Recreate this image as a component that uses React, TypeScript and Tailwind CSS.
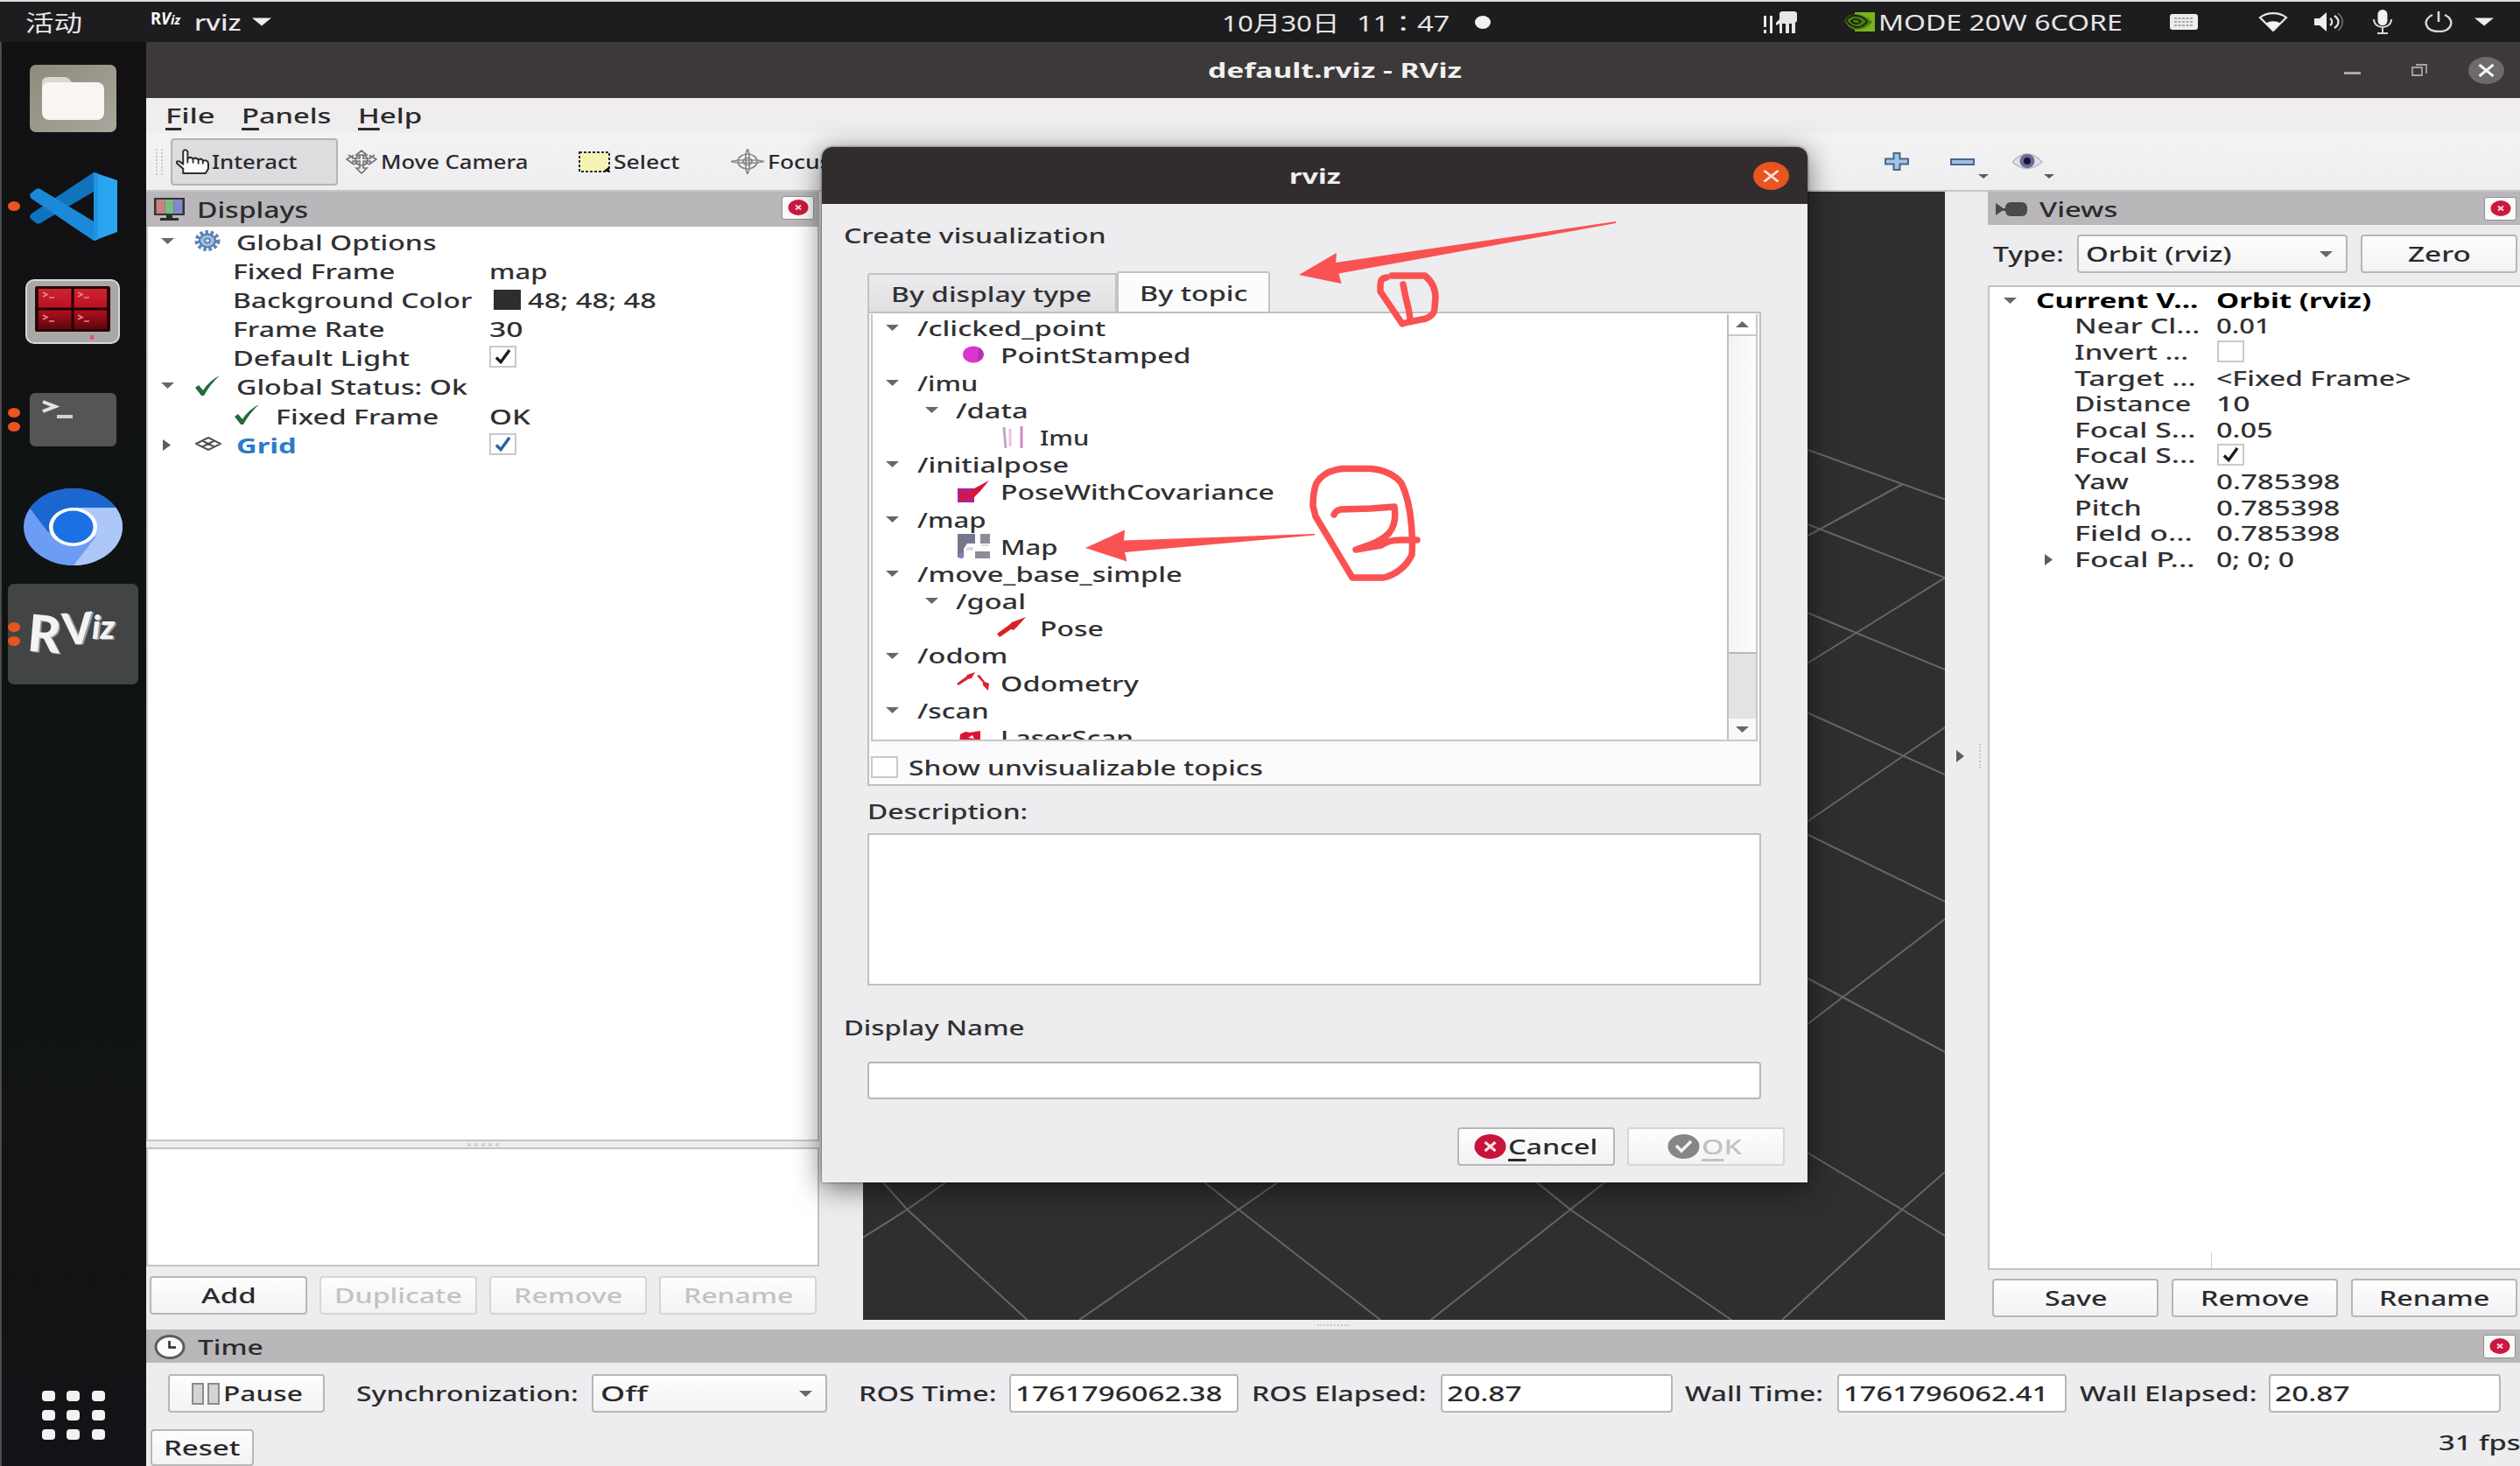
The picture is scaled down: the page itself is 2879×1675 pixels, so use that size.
import React, { useLayoutEffect, useRef, useState } from "react";

/* One line of text, stretched horizontally so that it fills the width class it is given. */
function T({ c, children }: { c: string; children: React.ReactNode }) {
  const inner = useRef<HTMLSpanElement>(null);
  const [scale, setScale] = useState(1);
  useLayoutEffect(() => {
    const el = inner.current;
    if (!el || !el.parentElement) return;
    setScale((el.parentElement.offsetWidth + 2) / el.offsetWidth);
  }, []);
  return (
    <span className={`block shrink-0 whitespace-pre ${c}`}>
      <span ref={inner} className="inline-block origin-left" style={{ transform: `translateX(-1px) scaleX(${scale})` }}>
        {children}
      </span>
    </span>
  );
}

const U = ({ children }: { children: React.ReactNode }) => (
  <span className="underline decoration-[3px] underline-offset-[5px]">{children}</span>
);

function Down({ c = "" }: { c?: string }) {
  return (
    <svg viewBox="0 0 14 7" preserveAspectRatio="none" className={`h-[7px] w-[15px] shrink-0 ${c}`}>
      <path d="M0 0H14L7 7Z" fill="#68686a" />
    </svg>
  );
}

function Right({ c = "" }: { c?: string }) {
  return (
    <svg viewBox="0 0 9 13" preserveAspectRatio="none" className={`h-[13px] w-[9px] shrink-0 ${c}`}>
      <path d="M0 0V13L9 6.500Z" fill="#5c5c5e" />
    </svg>
  );
}

function PanelClose({ c = "" }: { c?: string }) {
  return (
    <span className={`flex h-[27px] w-[37px] shrink-0 items-center justify-center rounded-[3px] border border-[#8f8e90] bg-[#fbfafb] ${c}`}>
      <svg viewBox="0 0 24 18" className="h-[18px] w-[24px]">
        <ellipse cx="12" cy="9" rx="11.500" ry="9" fill="#cc1840" />
        <path d="M9 6.500L15 11.500M15 6.500L9 11.500" stroke="#f8d5dc" strokeWidth="2" />
      </svg>
    </span>
  );
}

function Check({ c = "", on, color = "#1c1c1e" }: { c?: string; on?: boolean; color?: string }) {
  return (
    <span className={`flex h-[25px] w-[31px] shrink-0 items-center justify-center border-2 border-[#c9c8ca] bg-white ${c}`}>
      {on && (
        <svg viewBox="0 0 20 18" className="h-[17px] w-[19px]">
          <path d="M2 10L7.500 15.500L18 1" fill="none" stroke={color} strokeWidth="3.600" />
        </svg>
      )}
    </span>
  );
}

function Button({ c, disabled, children }: { c: string; disabled?: boolean; children: React.ReactNode }) {
  return (
    <span
      className={`flex shrink-0 items-center justify-center rounded-[4px] border-2 bg-linear-to-b from-[#fefefe] to-[#f3f2f4] ${
        disabled ? "border-[#d6d5d8] text-[#c3c2c5]" : "border-[#b7b6b9] text-[#2a2a2d]"
      } ${c}`}
    >
      {children}
    </span>
  );
}

/* ---------- top bar ---------- */

function TopBar() {
  return (
    <div className="flex h-[48px] shrink-0 items-center border-t-2 border-[#dcdcdc] bg-[#1d1c1e] text-[25px] text-[#e6e5e6]">
      <T c="ml-[30px] mt-[3px] w-[63px] text-[26px] font-normal">活动</T>
      <span className="ml-[80px] flex h-[26px] w-[34px] items-start font-bold leading-none text-white">
        <T c="w-[32px] text-[19px]">
          R<span className="italic">V</span>
          <span className="text-[15px] italic">iz</span>
        </T>
      </span>
      <T c="ml-[16px] w-[51px]">rviz</T>
      <svg viewBox="0 0 22 9" className="ml-[14px] h-[10px] w-[22px]">
        <path d="M0 0H22L11 9Z" fill="#eee" />
      </svg>
      <T c="ml-[1087px] mt-[2px] w-[132px] font-normal">10月30日</T>
      <T c="ml-[22px] mt-[2px] w-[104px] font-['Noto_Sans','Noto_Sans_CJK_TC',sans-serif] font-normal">11：47</T>
      <span className="ml-[30px] h-[15px] w-[18px] rounded-[50%] bg-[#f3f2f4]" />

      <svg viewBox="0 0 38 25" className="ml-[312px] h-[25px] w-[38px]" fill="#e8e6e6">
        <path d="M0 5H3V18H0ZM0 21H3V25H0ZM7 5H10V25H7ZM14 13L18 9V2L20 0H36L38 2V11L36 13V25H32V14H29V25H25V14H21V25H18V14L14 16Z" />
      </svg>
      <svg viewBox="0 0 36 22" className="ml-[53px] h-[22px] w-[36px]">
        <path d="M13 0H36V22H13Z" fill="#77b51c" />
        <path d="M1 9C6 2 14 1 20 3C28 6 31 9 33 11C28 17 22 20 15 20C8 20 4 15 1 9Z" fill="#4b7a14" />
        <path d="M3 9C7 4 13 3 18 4.500C23 6 26 9 27 11C23 16 18 17.500 14 17C9 16.500 6 13 3 9Z" fill="none" stroke="#17220a" strokeWidth="1.800" />
        <path d="M9 10C12 6.500 16 7 20 10.500C17 14 12 14 9 10Z" fill="none" stroke="#17220a" strokeWidth="1.800" />
      </svg>
      <T c="ml-[5px] w-[277px] font-normal">MODE 20W 6CORE</T>
      <svg viewBox="0 0 32 18" className="ml-[55px] h-[18px] w-[32px]">
        <rect width="32" height="18" rx="3" fill="#efeeee" />
        <path d="M5 5H27M5 9H27M5 13H27" stroke="#a9a8aa" strokeWidth="2" strokeDasharray="3 1.500" />
      </svg>
      <svg viewBox="0 0 34 22" className="ml-[69px] h-[22px] w-[34px]">
        <path d="M2 6C10 -0.500 24 -0.500 32 6L17 21Z" fill="none" stroke="#e8e6e6" strokeWidth="2.200" />
        <path d="M9 12.500C14 9.500 20 9.500 25 12.500L17 21Z" fill="#f5f4f4" />
      </svg>
      <svg viewBox="0 0 34 24" className="ml-[29px] h-[24px] w-[34px]">
        <path d="M1 8H7L15 1V23L7 16H1Z" fill="#f0efef" />
        <path d="M19 8C22 10 22 14 19 16" fill="none" stroke="#e8e6e6" strokeWidth="2.200" />
        <path d="M24 5C30 9 30 15 24 19" fill="none" stroke="#e8e6e6" strokeWidth="2.200" />
        <path d="M28 2C35 8 35 16 28 22" fill="none" stroke="#757475" strokeWidth="1.500" />
      </svg>
      <svg viewBox="0 0 24 28" className="ml-[33px] h-[28px] w-[24px]">
        <rect x="6.500" y="0" width="11" height="18" rx="5.500" fill="#f3f2f2" />
        <path d="M2 11C2 23 22 23 22 11M12 20V26M6 27H18" fill="none" stroke="#d9d8d8" strokeWidth="2" />
      </svg>
      <svg viewBox="0 0 32 24" className="ml-[36px] h-[24px] w-[32px]">
        <path d="M9 4C-3 9 0 23 16 23C32 23 35 9 23 4" fill="none" stroke="#d9d8d8" strokeWidth="2.400" />
        <path d="M16 0V12" stroke="#d9d8d8" strokeWidth="2.600" />
      </svg>
      <svg viewBox="0 0 22 9" className="ml-[25px] h-[10px] w-[22px]">
        <path d="M0 0H22L11 9Z" fill="#eee" />
      </svg>
    </div>
  );
}

/* ---------- dock ---------- */

function Dots({ n }: { n: number }) {
  return (
    <span className="flex w-[14px] shrink-0 flex-col gap-[5px]">
      {Array.from({ length: n }, (_, i) => (
        <span key={i} className="h-[11px] w-[14px] rounded-[50%] bg-[#e95420]" />
      ))}
    </span>
  );
}

function Dock() {
  return (
    <div className="flex w-[167px] shrink-0 flex-col border-l-2 border-[#4a4b4c] bg-linear-to-b from-[#121013] via-[#0e1412] to-[#141216]">
      <svg viewBox="0 0 99 77" className="ml-[32px] mt-[26px] h-[77px] w-[99px] shrink-0">
        <defs>
          <linearGradient id="files" x1="0" y1="0" x2="1" y2="1">
            <stop offset="0" stopColor="#8e8b7c" />
            <stop offset="1" stopColor="#aaa69b" />
          </linearGradient>
        </defs>
        <rect width="99" height="77" rx="7" fill="url(#files)" />
        <path d="M14 20Q14 14 22 14H40Q44 14 48 20H76V40H14Z" fill="#dcd8d0" />
        <rect x="14" y="20" width="71" height="43" rx="8" fill="#f9f5f3" />
      </svg>

      <div className="mt-[46px] flex h-[77px] items-center">
        <span className="ml-[7px]">
          <Dots n={1} />
        </span>
        <svg viewBox="0 0 100 78" className="ml-[11px] h-[78px] w-[100px]">
          <path d="M73 0L100 9V68L73 78Z" fill="#2aa5f2" />
          <path d="M73 0V22L12 58Q9 60 6 57L1 53Q-1 50 2 47Z" fill="#0f74bd" />
          <path d="M73 78V56L12 19Q9 17 6 20L1 24Q-1 27 2 30Z" fill="#1b88d8" />
          <path d="M73 0L78 1V77L73 78Z" fill="#1f95e2" />
        </svg>
      </div>

      <svg viewBox="0 0 108 74" className="ml-[27px] mt-[45px] h-[74px] w-[108px] shrink-0">
        <defs>
          <linearGradient id="tr" x1="0" y1="0" x2="0" y2="1">
            <stop offset="0" stopColor="#cf2333" />
            <stop offset="0.500" stopColor="#b8101f" />
            <stop offset="1" stopColor="#5c060c" />
          </linearGradient>
        </defs>
        <rect x="1" y="1" width="106" height="72" rx="9" fill="#a9a8a6" stroke="#d8d7d4" strokeWidth="2" />
        <rect x="11" y="8" width="86" height="52" rx="2" fill="#2c0507" />
        <rect x="15" y="11" width="78" height="46" fill="url(#tr)" />
        <path d="M54 9V59M12 34H96" stroke="#1d0304" strokeWidth="3" />
        <path d="M20 15L25 17.500L20 20M27 21H33M60 15L65 17.500L60 20M67 21H73M20 41L25 43.500L20 46M27 48H33M60 41L65 43.500L60 46M67 48H73" fill="none" stroke="#e58a90" strokeWidth="1.600" />
        <path d="M76 64V69" stroke="#e84a7a" strokeWidth="4" />
      </svg>

      <div className="mt-[56px] flex h-[61px] items-center">
        <span className="ml-[7px]">
          <Dots n={2} />
        </span>
        <svg viewBox="0 0 99 61" className="ml-[11px] h-[61px] w-[99px]">
          <rect width="99" height="61" rx="6" fill="#555557" />
          <path d="M15 10L29 15.500L15 21" fill="none" stroke="#e4e3e3" strokeWidth="4" />
          <path d="M31 27H49" stroke="#d4d3d3" strokeWidth="4" />
        </svg>
      </div>

      <svg viewBox="0 0 113 88" className="ml-[25px] mt-[48px] h-[88px] w-[113px] shrink-0">
        <clipPath id="disc">
          <ellipse cx="56.500" cy="44" rx="56.500" ry="44" />
        </clipPath>
        <g clipPath="url(#disc)">
          <rect width="113" height="88" fill="#6c9cf4" />
          <path d="M5 20L28 50L56 44L84 23H113V0H0Z" fill="#1b66d0" />
          <path d="M56 22H113V88H57L82 56Z" fill="#acc7f8" />
        </g>
        <ellipse cx="56.500" cy="44" rx="27.500" ry="22" fill="#fff" />
        <ellipse cx="56.500" cy="44" rx="23" ry="18.500" fill="#1a70e4" />
      </svg>

      <div className="ml-[7px] mt-[21px] flex h-[115px] w-[149px] shrink-0 items-center rounded-[7px] bg-[#424445]">
        <Dots n={2} />
        <span className="ml-[9px] flex h-[92px] items-start font-['Lato'] font-black leading-none text-[#f4f3f3] [text-shadow:2px_1px_0_#98989a]">
          <span className="mt-[15px] w-[39px] rotate-[5deg] text-[58px]">R</span>
          <span className="mt-[13px] w-[34px] -rotate-[4deg] text-[50px]">V</span>
          <span className="mt-[17px] text-[38px] italic">iz</span>
        </span>
      </div>

      <div className="mb-[30px] ml-[46px] mt-auto grid w-[71px] grid-cols-3 gap-x-[14px] gap-y-[10px]">
        {Array.from({ length: 9 }, (_, i) => (
          <span key={i} className="h-[12px] w-[15px] rounded-[4px] bg-[#f3f2f2]" />
        ))}
      </div>
    </div>
  );
}

/* ---------- window chrome ---------- */

function TitleBar() {
  return (
    <div className="flex h-[64px] shrink-0 items-center bg-[#3d393a] font-bold text-[24px] text-[#f1f0f0]">
      <T c="ml-[1214px] w-[288px]">default.rviz - RViz</T>
      <span className="ml-[1009px] mt-[6px] h-[3px] w-[19px] bg-[#aaa8a9]" />
      <svg viewBox="0 0 18 14" className="ml-[58px] h-[14px] w-[18px]">
        <path d="M1 4H12V13H1ZM5 1H17V11" fill="none" stroke="#a5a3a4" strokeWidth="1.800" />
      </svg>
      <svg viewBox="0 0 41 31" className="ml-[47px] h-[31px] w-[41px]">
        <ellipse cx="20.500" cy="15.500" rx="20.500" ry="15.500" fill="#6c6a6b" />
        <path d="M12.500 9L28.500 22M28.500 9L12.500 22" stroke="#f3f2f2" strokeWidth="3" />
      </svg>
    </div>
  );
}

function MenuBar() {
  return (
    <div className="flex h-[40px] shrink-0 items-center bg-[#efedee] text-[24px] text-[#2a2a2d]">
      <T c="ml-[23px] w-[54px]"><U>F</U>ile</T>
      <T c="ml-[33px] w-[100px]"><U>P</U>anels</T>
      <T c="ml-[33px] w-[71px]"><U>H</U>elp</T>
    </div>
  );
}

function ToolBar() {
  return (
    <div className="flex h-[67px] shrink-0 items-center border-b-2 border-[#c6c5c7] bg-linear-to-b from-[#f4f3f4] to-[#eeedef] text-[22px] text-[#2a2a2d]">
      <span className="ml-[11px] h-[30px] w-[8px] border-x-2 border-dotted border-[#c9c8ca]" />
      <span className="ml-[9px] flex h-[54px] w-[191px] items-center rounded-[4px] border-2 border-[#b5b4b6] bg-[#dddcde]">
        <svg viewBox="0 0 37 28" preserveAspectRatio="none" className="ml-[4px] h-[29px] w-[38px] shrink-0">
          <path d="M8 27V22L1 16Q0 13 4 14L8 17V3Q10 -0.500 13 3V11Q16 8 19 11Q22 9 25 12Q28 10 30 13Q36 12 36 17V22L33 27Z" fill="#fdfdfd" stroke="#2f2f31" strokeWidth="2" strokeLinejoin="round" />
          <path d="M13 11V16M19 11V16M25 12V17M30 13V17" stroke="#2f2f31" strokeWidth="1.800" />
        </svg>
        <T c="ml-[4px] w-[95px]">Interact</T>
      </span>
      <svg viewBox="0 0 36 28" className="ml-[9px] h-[28px] w-[36px]" fill="none" stroke="#77777a" strokeWidth="1.700">
        <path d="M18 1L24 6H20V10H28V7L35 11L28 16V13H20V21H24L18 27L12 21H16V13H8V16L1 11L8 7V10H16V6H12Z" />
        <path d="M3 6L8 9M33 6L28 9M9 17L14 14M27 17L22 14" />
        <ellipse cx="18" cy="12" rx="7" ry="6" />
      </svg>
      <T c="ml-[5px] w-[167px]">Move Camera</T>
      <svg viewBox="0 0 36 24" className="ml-[58px] h-[24px] w-[36px]">
        <rect x="1" y="1" width="34" height="22" fill="#f6f4b4" stroke="#2b2b2b" strokeWidth="2" strokeDasharray="3 2" />
        <path d="M35 17V23H28Z" fill="#111" />
      </svg>
      <T c="ml-[5px] w-[74px]">Select</T>
      <svg viewBox="0 0 38 29" className="ml-[59px] h-[29px] w-[38px]" fill="none" stroke="#88888a" strokeWidth="1.700">
        <ellipse cx="19" cy="14.500" rx="11" ry="8.500" />
        <ellipse cx="19" cy="14.500" rx="5" ry="4" />
        <path d="M19 0L21 6V23L19 29L17 23V6ZM0 14.500L8 13H30L38 14.500L30 16H8Z" />
      </svg>
      <T c="ml-[5px] w-[70px]">Focus</T>
      <svg viewBox="0 0 28 21" className="ml-[1205px] h-[21px] w-[28px]">
        <path d="M10.500 1H17.500V7.500H27V13.500H17.500V20H10.500V13.500H1V7.500H10.500Z" fill="#a4c3e6" stroke="#44698f" strokeWidth="2" />
      </svg>
      <svg viewBox="0 0 44 34" className="ml-[47px] mt-[4px] h-[34px] w-[44px]">
        <path d="M1 12H27V18H1Z" fill="#9fbfe2" stroke="#44698f" strokeWidth="2" />
        <path d="M32 29H44L38 34Z" fill="#5c5c5e" />
      </svg>
      <svg viewBox="0 0 48 34" className="ml-[27px] mt-[4px] h-[34px] w-[48px]">
        <path d="M0 15Q17 -3 34 15Q17 30 0 15Z" fill="#e3e1e6" stroke="#b9b7bb" strokeWidth="1.500" />
        <ellipse cx="17" cy="14" rx="8.500" ry="8" fill="#6a6c9c" />
        <ellipse cx="17" cy="14" rx="4" ry="4" fill="#15152e" />
        <path d="M36 29H48L42 34Z" fill="#5c5c5e" />
      </svg>
    </div>
  );
}

/* ---------- displays panel ---------- */

const Gear = () => (
  <svg viewBox="0 0 30 24" className="mb-[4px] h-[24px] w-[30px]">
    <ellipse cx="15" cy="12" rx="12" ry="9.500" fill="none" stroke="#5f86b8" strokeWidth="5" strokeDasharray="3.500 2.500" />
    <ellipse cx="15" cy="12" rx="9" ry="7.500" fill="#9fbbdd" stroke="#5078ad" strokeWidth="2" />
    <ellipse cx="15" cy="12" rx="3" ry="2.500" fill="#dce7f4" stroke="#5078ad" strokeWidth="1.500" />
  </svg>
);

const Tick = () => (
  <svg viewBox="0 0 30 24" className="mb-[2px] h-[24px] w-[30px]">
    <path d="M1 14L5 11L10 17Q17 6 29 0Q18 10 11 23H8Z" fill="#1f6b3b" />
  </svg>
);

const GridIcon = () => (
  <svg viewBox="0 0 30 16" className="mb-[2px] h-[16px] w-[30px]" fill="none" stroke="#4f4f52" strokeWidth="2">
    <path d="M1 8L15 1L29 8L15 15ZM8 4.500L22 11.500M22 4.500L8 11.500" />
  </svg>
);

function Row({ label, children }: { label: React.ReactNode; children?: React.ReactNode }) {
  return (
    <div className="flex h-[33.1px] items-center">
      <div className="flex w-[391px] shrink-0 items-center">{label}</div>
      {children}
    </div>
  );
}

function Displays() {
  return (
    <div className="flex w-[769px] shrink-0 flex-col">
      <div className="flex h-[40px] shrink-0 items-center bg-[#b9b7ba] text-[25px] text-[#2a2a2d]">
        <svg viewBox="0 0 37 28" className="ml-[8px] h-[28px] w-[37px]">
          <rect x="1" y="1" width="35" height="20" fill="#333" />
          <path d="M3.500 3H13.500V19H3.500Z" fill="#c98183" />
          <path d="M13.500 3H23.500V19H13.500Z" fill="#7dbb84" />
          <path d="M23.500 3H33.500V19H23.500Z" fill="#8588cf" />
          <path d="M15 21H22V24H29V27H8V24H15Z" fill="#2b2b2b" />
        </svg>
        <T c="ml-[14px] w-[125px]">Displays</T>
        <PanelClose c="ml-auto mb-[4px] mr-[6px]" />
      </div>
      <div className="flex h-[1045px] shrink-0 flex-col border-2 border-t-0 border-[#c6c5c7] bg-white pt-px text-[24px] text-[#303033]">
        <Row label={<><Down c="mb-[3px] ml-[15px] mr-[23px]" /><Gear /><T c="ml-[19px] w-[227px]">Global Options</T></>} />
        <Row label={<T c="ml-[98px] w-[183px]">Fixed Frame</T>}>
          <T c="w-[64px]">map</T>
        </Row>
        <Row label={<T c="ml-[98px] w-[271px]">Background Color</T>}>
          <span className="ml-[4px] h-[23px] w-[31px] bg-[#2d2d2e]" />
          <T c="ml-[9px] w-[145px]">48; 48; 48</T>
        </Row>
        <Row label={<T c="ml-[98px] w-[172px]">Frame Rate</T>}>
          <T c="w-[36px]">30</T>
        </Row>
        <Row label={<T c="ml-[98px] w-[200px]">Default Light</T>}>
          <Check on c="-ml-px mb-[3px]" />
        </Row>
        <Row label={<><Down c="mb-[3px] ml-[15px] mr-[23px]" /><Tick /><T c="ml-[19px] w-[262px]">Global Status: Ok</T></>} />
        <Row label={<><span className="ml-[98px]"><Tick /></span><T c="ml-[19px] w-[184px]">Fixed Frame</T></>}>
          <T c="w-[45px]">OK</T>
        </Row>
        <Row label={<><Right c="ml-[17px] mr-[28px]" /><GridIcon /><T c="ml-[18px] w-[66px] font-bold text-[#2c7bc8]">Grid</T></>}>
          <Check on c="-ml-px mb-px" color="#2f5f9e" />
        </Row>
      </div>
      <div className="flex h-[7px] shrink-0 items-center justify-center">
        <span className="w-[36px] border-t-[4px] border-dotted border-[#cfced0]" />
      </div>
      <div className="h-[136px] shrink-0 border-2 border-[#c3c2c4] bg-white" />
      <div className="mt-[11px] flex gap-[14px] pl-[4px] text-[24px]">
        <Button c="h-[44px] w-[180px]"><T c="w-[60px]">Add</T></Button>
        <Button disabled c="h-[44px] w-[180px]"><T c="w-[144px]">Duplicate</T></Button>
        <Button disabled c="h-[44px] w-[180px]"><T c="w-[122px]">Remove</T></Button>
        <Button disabled c="h-[44px] w-[180px]"><T c="w-[123px]">Rename</T></Button>
      </div>
    </div>
  );
}

/* ---------- 3D view ---------- */

const gridLines = [
  "M2060 512L2222 570.500", "M2174 553L2060 615", "M2060 597L2222 660", "M2222 660L2060 761", "M2060 698L2222 765",
  "M2060 812L2222 885", "M2222 831L2060 942", "M2060 951L2222 1030", "M2222 1050L2060 1174", "M2060 1115L2222 1202",
  "M2060 1314L2173 1382L2222 1412", "M2222 1339L2173 1382L2036 1508", "M990 1330L1036.500 1382L1173.600 1508",
  "M1110 1330L1036.500 1382L986 1414", "M1350 1330L1415 1382L1577 1508", "M1490 1330L1415 1382L1233 1508",
  "M1730 1330L1794 1382L1978 1508", "M1860 1330L1794 1382L1634.700 1508",
];

function Viewport() {
  return (
    <div className="ml-[50px] w-[1236px] shrink-0 bg-[#2f2f31]">
      <svg viewBox="986 219 1236 1289" className="h-[1289px] w-[1236px]">
        <path d={gridLines.join("")} fill="none" stroke="#666668" strokeWidth="2" />
      </svg>
    </div>
  );
}

/* ---------- views panel ---------- */

function VRow({ label, children }: { label: React.ReactNode; children: React.ReactNode }) {
  return (
    <div className="flex h-[29.6px] items-center">
      <div className="flex w-[260px] shrink-0 items-center">{label}</div>
      {children}
    </div>
  );
}

function Views() {
  return (
    <div className="flex flex-1 flex-col">
      <div className="flex h-[38px] shrink-0 items-center bg-[#b9b7ba] text-[24px] text-[#2a2a2d]">
        <svg viewBox="0 0 36 16" className="ml-[9px] mt-[2px] h-[16px] w-[36px]" fill="#4a4a4c">
          <path d="M0 1L10 8L0 15Z" />
          <rect x="11" y="0" width="25" height="16" rx="6" />
          <path d="M8 7H13V10H8Z" />
        </svg>
        <T c="ml-[15px] mt-[2px] w-[88px]">Views</T>
        <PanelClose c="ml-auto mr-[4px]" />
      </div>
      <div className="mt-[11px] flex items-center pl-[7px] text-[24px] text-[#2a2a2d]">
        <T c="w-[79px]">Type:</T>
        <span className="ml-[16px] flex h-[44px] w-[309px] items-center justify-between rounded-[4px] border-2 border-[#b7b6b9] bg-linear-to-b from-[#fefefe] to-[#f3f2f4] pl-[9px] pr-[15px]">
          <T c="w-[164px]">Orbit (rviz)</T>
          <Down />
        </span>
        <Button c="ml-[15px] h-[44px] w-[179px]"><T c="w-[70px]">Zero</T></Button>
      </div>
      <div className="mt-[14px] flex h-[1125px] shrink-0 flex-col border-2 border-r-0 border-[#c3c2c4] bg-white pt-px text-[23px] text-[#303033]">
        <VRow label={<><Down c="ml-[16px] mr-[23px]" /><T c="w-[184px] font-bold text-black">Current V...</T></>}>
          <T c="w-[175px] font-bold text-black">Orbit (rviz)</T>
        </VRow>
        <VRow label={<T c="ml-[98px] w-[142px]">Near Cl...</T>}><T c="w-[60px]">0.01</T></VRow>
        <VRow label={<T c="ml-[98px] w-[128px]">Invert ...</T>}><Check c="mb-[3px]" /></VRow>
        <VRow label={<T c="ml-[98px] w-[137px]">Target ...</T>}><T c="w-[221px]">&lt;Fixed Frame&gt;</T></VRow>
        <VRow label={<T c="ml-[98px] w-[131px]">Distance</T>}><T c="w-[36px]">10</T></VRow>
        <VRow label={<T c="ml-[98px] w-[136px]">Focal S...</T>}><T c="w-[63px]">0.05</T></VRow>
        <VRow label={<T c="ml-[98px] w-[136px]">Focal S...</T>}><Check on c="mb-[3px]" /></VRow>
        <VRow label={<T c="ml-[98px] w-[60px]">Yaw</T>}><T c="w-[139px]">0.785398</T></VRow>
        <VRow label={<T c="ml-[98px] w-[75px]">Pitch</T>}><T c="w-[139px]">0.785398</T></VRow>
        <VRow label={<T c="ml-[98px] w-[133px]">Field o...</T>}><T c="w-[139px]">0.785398</T></VRow>
        <VRow label={<><Right c="ml-[63px] mr-[26px]" /><T c="w-[136px]">Focal P...</T></>}><T c="w-[87px]">0; 0; 0</T></VRow>
        <span className="ml-[253px] mt-auto h-[18px] w-px bg-[#cfced0]" />
      </div>
      <div className="mt-[10px] flex gap-[15px] pl-[5px] text-[24px]">
        <Button c="h-[44px] w-[190px]"><T c="w-[69px]">Save</T></Button>
        <Button c="h-[44px] w-[190px]"><T c="w-[122px]">Remove</T></Button>
        <Button c="h-[44px] w-[190px]"><T c="w-[124px]">Rename</T></Button>
      </div>
    </div>
  );
}

/* ---------- time panel ---------- */

function Field({ c, children }: { c: string; children: React.ReactNode }) {
  return (
    <span className={`flex h-[44px] shrink-0 items-center rounded-[4px] border-2 border-[#b7b6b9] bg-white pl-[6px] ${c}`}>{children}</span>
  );
}

function Time() {
  return (
    <div className="flex flex-1 flex-col text-[24px] text-[#2a2a2d]">
      <div className="flex h-[38px] shrink-0 items-center bg-[#b9b7ba]">
        <svg viewBox="0 0 36 28" className="ml-[9px] mt-[2px] h-[28px] w-[36px]">
          <ellipse cx="18" cy="14" rx="16" ry="12.500" fill="#fbfbfb" stroke="#5c5c5e" strokeWidth="3" />
          <path d="M17.500 7V14.500H25" fill="none" stroke="#2b2b2d" strokeWidth="2.500" />
        </svg>
        <T c="ml-[15px] mt-[2px] w-[72px]">Time</T>
        <PanelClose c="ml-auto mr-[5px]" />
      </div>
      <div className="mt-[13px] flex items-center">
        <Button c="ml-[25px] h-[44px] w-[179px]">
          <svg viewBox="0 0 33 25" className="h-[25px] w-[33px]">
            <path d="M1 1H13V24H1ZM19 1H31V24H19Z" fill="#d3d2d5" stroke="#8b8a8d" strokeWidth="2" />
          </svg>
          <T c="ml-[4px] w-[89px]">Pause</T>
        </Button>
        <T c="ml-[37px] w-[252px]">Synchronization:</T>
        <span className="ml-[16px] flex h-[44px] w-[269px] items-center justify-between rounded-[4px] border-2 border-[#b7b6b9] bg-linear-to-b from-[#fefefe] to-[#f3f2f4] pl-[9px] pr-[15px]">
          <T c="w-[52px]">Off</T>
          <Down />
        </span>
        <T c="ml-[37px] w-[155px]">ROS Time:</T>
        <Field c="ml-[16px] w-[262px]"><T c="w-[234px]">1761796062.38</T></Field>
        <T c="ml-[16px] w-[198px]">ROS Elapsed:</T>
        <Field c="ml-[17px] w-[265px]"><T c="w-[83px]">20.87</T></Field>
        <T c="ml-[15px] w-[156px]">Wall Time:</T>
        <Field c="ml-[17px] w-[262px]"><T c="w-[232px]">1761796062.41</T></Field>
        <T c="ml-[16px] w-[200px]">Wall Elapsed:</T>
        <Field c="ml-[15px] w-[265px]"><T c="w-[83px]">20.87</T></Field>
      </div>
      <div className="mt-[19px] flex items-start">
        <Button c="ml-[5px] h-[42px] w-[118px]"><T c="w-[86px]">Reset</T></Button>
        <T c="-mt-px ml-auto w-[92px]">31 fps</T>
      </div>
    </div>
  );
}

/* ---------- dialog ---------- */

const PointIcon = () => (
  <svg viewBox="0 0 38 28" className="h-[28px] w-[38px]">
    <ellipse cx="19" cy="13" rx="12" ry="9.500" fill="#d936cf" />
    <path d="M25 5Q31 9 30 14Q28 19 24 21.500Z" fill="#b033b0" />
  </svg>
);
const ImuIcon = () => (
  <svg viewBox="0 0 38 28" className="h-[28px] w-[38px]" fill="none" strokeWidth="3">
    <path d="M9 2L11 26" stroke="#c9a0cc" />
    <path d="M16 4V24" stroke="#eebfe6" />
    <path d="M29 1V26" stroke="#d287c6" />
  </svg>
);
const CovIcon = () => (
  <svg viewBox="0 0 38 28" className="h-[28px] w-[38px]">
    <path d="M1 10H20V26H1Z" fill="#b0208e" />
    <path d="M4 12L9 17L22 9L37 1L27 13L18 22L13 20L4 25Z" fill="#d3183c" />
  </svg>
);
const MapIcon = () => (
  <svg viewBox="0 0 38 28" className="h-[28px] w-[38px]">
    <path d="M1 0H21V11H12L8 17V27H1Z" fill="#75788c" />
    <path d="M27 0H38V11H27ZM21 20H38V28H21Z" fill="#8b8d98" />
    <path d="M11 15H19V19H11ZM28 12H37V14H28Z" fill="#dcdbe2" />
    <path d="M3 22H7V28H3Z" fill="#8a7ae0" />
  </svg>
);
const PoseIcon = () => (
  <svg viewBox="0 0 38 28" className="h-[28px] w-[38px]">
    <path d="M1 20L15 10L18 7L34 1L26 10L20 16L17 15L4 24Z" fill="#d92027" />
  </svg>
);
const OdomIcon = () => (
  <svg viewBox="0 0 38 28" className="h-[28px] w-[38px]" fill="#d8242f">
    <path d="M0 15L11 7L12 5L21 2L17 9L13 10L2 17Z" />
    <path d="M23 6L26 5L32 13L37 15L36 23L30 17V14Z" />
  </svg>
);
const LaserIcon = () => (
  <svg viewBox="0 0 38 28" className="h-[28px] w-[38px]">
    <path d="M4 10L10 7L15 8L27 6V26H18L16 17L8 26L3 20Z" fill="#dc1433" />
    <path d="M13 14L18 11L20 15Z" fill="#fff" />
  </svg>
);

function Topic({ deep, c, children }: { deep?: boolean; c: string; children: React.ReactNode }) {
  return (
    <div className={`flex h-[31.2px] shrink-0 items-center ${deep ? "pl-[60px]" : "pl-[15px]"}`}>
      <Down c={deep ? "mr-[21px]" : "mr-[22px]"} />
      <T c={c}>{children}</T>
    </div>
  );
}

function Leaf({ deep, c, icon, children }: { deep?: boolean; c: string; icon: React.ReactNode; children: React.ReactNode }) {
  return (
    <div className={`flex h-[31.2px] shrink-0 items-center ${deep ? "pl-[141px]" : "pl-[96px]"}`}>
      <span className="mr-[13px] shrink-0">{icon}</span>
      <T c={c}>{children}</T>
    </div>
  );
}

function Dialog() {
  return (
    <div className="absolute left-[939px] top-[168px] flex h-[1183px] w-[1126px] flex-col rounded-t-[12px] bg-[#edecee] text-[24px] text-[#303033] shadow-[0_6px_32px_rgba(0,0,0,0.55),0_0_3px_rgba(0,0,0,0.6)]">
      <div className="flex h-[65px] shrink-0 items-center rounded-t-[12px] bg-[#312d2e] font-bold text-[#f1f0f0]">
        <T c="ml-[535px] w-[56px]">rviz</T>
        <svg viewBox="0 0 41 32" className="ml-auto mr-[21px] h-[32px] w-[41px]">
          <ellipse cx="20.500" cy="16" rx="20.500" ry="16" fill="#e95420" />
          <path d="M12.500 10L28.500 22.500M28.500 10L12.500 22.500" stroke="#fbe6df" strokeWidth="2.800" />
        </svg>
      </div>
      <T c="ml-[26px] mt-[20px] w-[298px]">Create visualization</T>
      <div className="ml-[52px] mt-[26px] flex h-[46px] shrink-0 items-end">
        <span className="flex h-[44px] w-[285px] items-center justify-center rounded-tl-[3px] border-2 border-b-0 border-[#c3c2c4] bg-linear-to-b from-[#ecebed] to-[#e0dfe1]">
          <T c="mr-[2px] mt-px w-[227px]">By display type</T>
        </span>
        <span className="flex h-[46px] w-[175px] items-center justify-center rounded-t-[3px] border-2 border-b-0 border-[#c3c2c4] bg-[#fcfcfd]">
          <T c="w-[122px]">By topic</T>
        </span>
      </div>
      <div className="ml-[52px] flex h-[542px] w-[1021px] shrink-0 flex-col border-2 border-[#c0bfc1] bg-[#fcfbfc] px-[2px] pt-px">
        <div className="flex h-[488px] shrink-0 border-2 border-t-0 border-[#c8c7c9] bg-white">
          <div className="flex min-w-0 flex-1 flex-col overflow-hidden">
            <Topic c="w-[214px]">/clicked_point</Topic>
            <Leaf icon={<PointIcon />} c="w-[215px]">PointStamped</Leaf>
            <Topic c="w-[68px]">/imu</Topic>
            <Topic deep c="w-[81px]">/data</Topic>
            <Leaf deep icon={<ImuIcon />} c="w-[54px]">Imu</Leaf>
            <Topic c="w-[171px]">/initialpose</Topic>
            <Leaf icon={<CovIcon />} c="w-[311px]">PoseWithCovariance</Leaf>
            <Topic c="w-[77px]">/map</Topic>
            <Leaf icon={<MapIcon />} c="w-[64px]">Map</Leaf>
            <Topic c="w-[300px]">/move_base_simple</Topic>
            <Topic deep c="w-[78px]">/goal</Topic>
            <Leaf deep icon={<PoseIcon />} c="w-[71px]">Pose</Leaf>
            <Topic c="w-[101px]">/odom</Topic>
            <Leaf icon={<OdomIcon />} c="w-[156px]">Odometry</Leaf>
            <Topic c="w-[79px]">/scan</Topic>
            <Leaf icon={<LaserIcon />} c="w-[150px]">LaserScan</Leaf>
          </div>
          <div className="flex w-[33px] shrink-0 flex-col border-l-2 border-[#bfbec0] bg-[#e3e2e4]">
            <span className="flex h-[25px] items-center justify-center border-b-2 border-[#c8c7c9] bg-white">
              <Down c="rotate-180" />
            </span>
            <span className="h-[363px] border-b-2 border-[#b7b6b8] bg-linear-to-r from-[#f3f2f5] to-[#fdfdfd]" />
            <span className="mt-auto flex h-[24px] items-center justify-center bg-[#f8f7f9]">
              <Down />
            </span>
          </div>
        </div>
        <div className="flex flex-1 items-center pt-[9px]">
          <Check />
          <T c="ml-[13px] w-[403px]">Show unvisualizable topics</T>
        </div>
      </div>
      <T c="ml-[53px] mt-[13px] w-[181px]">Description:</T>
      <div className="ml-[52px] mt-[10px] h-[174px] w-[1021px] shrink-0 border-2 border-[#c0bfc1] bg-white" />
      <T c="ml-[26px] mt-[32px] w-[205px]">Display Name</T>
      <div className="ml-[52px] mt-[23px] h-[43px] w-[1021px] shrink-0 rounded-[4px] border-2 border-[#b7b6b9] bg-white" />
      <div className="mt-[32px] flex justify-end gap-[14px] pr-[26px]">
        <Button c="h-[44px] w-[180px]">
          <svg viewBox="0 0 37 28" className="-ml-[3px] h-[28px] w-[37px]">
            <ellipse cx="18.500" cy="14" rx="18" ry="14" fill="#c8143a" />
            <path d="M12.500 9L24.500 19M24.500 9L12.500 19" stroke="#fbe3e8" strokeWidth="3" />
          </svg>
          <T c="ml-[3px] w-[100px]"><U>C</U>ancel</T>
        </Button>
        <Button disabled c="h-[44px] w-[180px]">
          <svg viewBox="0 0 37 28" className="-ml-[4px] h-[28px] w-[37px]">
            <ellipse cx="18.500" cy="14" rx="18" ry="14" fill="#868688" />
            <path d="M10 13L16 19L27 8" fill="none" stroke="#f3f3f3" strokeWidth="3.500" />
          </svg>
          <T c="ml-[3px] w-[44px]"><U>O</U>K</T>
        </Button>
      </div>
    </div>
  );
}

/* Red hand-drawn marks over the dialog. */
function Marks() {
  return (
    <svg viewBox="1230 240 630 440" className="absolute left-[1230px] top-[240px] h-[440px] w-[630px]">
      <g fill="#fa5252">
        <path d="M1484 314L1527 289L1526 300L1846 253V255L1529.500 312.500L1532.500 324Z" />
        <path d="M1240 626L1285 605.500L1284 617.500L1502 610V611.600L1285 631L1287.500 641.500Z" />
      </g>
      <g fill="none" stroke="#fa5252" strokeWidth="7.500" strokeLinecap="round" strokeLinejoin="round">
        <path d="M1584 317Q1577 318 1577 325V333L1602 370L1609 368L1629 364Q1639 360 1639 352L1640 340Q1640 325 1628 315H1590" />
        <path d="M1603 325L1606 340L1609 352L1611 364" />
        <path d="M1566 535.500H1534Q1512 538 1504 552Q1500 562 1500 578L1503 590L1545 660H1581Q1603 654 1613 634Q1614 620 1612.500 600Q1610 570 1601 552Q1590 538 1566 535.500" />
        <path d="M1524 588Q1526 583 1532 582L1566 581L1593 579Q1596 598 1587 609Q1578 618 1566 622L1549 628L1578 623Q1586 617 1600 617H1619" />
      </g>
    </svg>
  );
}

export default function App() {
  return (
    <div className="relative flex h-[1675px] w-[2879px] flex-col overflow-hidden bg-[#edecee] font-['Noto_Sans','Noto_Sans_CJK_SC',sans-serif] font-medium leading-[1.3]">
      <TopBar />
      <div className="flex min-h-0 flex-1">
        <Dock />
        <div className="flex min-w-0 flex-1 flex-col bg-[#edecee]">
          <TitleBar />
          <MenuBar />
          <ToolBar />
          <div className="flex h-[1289px] shrink-0">
            <Displays />
            <Viewport />
            <div className="flex w-[49px] shrink-0 items-center">
              <Right c="ml-[13px] h-[14px]" />
              <span className="ml-[17px] h-[28px] border-l-2 border-dotted border-[#c9c8ca]" />
            </div>
            <Views />
          </div>
          <div className="flex h-[11px] shrink-0 items-center justify-center">
            <span className="h-0 w-[36px] border-t-2 border-dotted border-[#c9c8ca]" />
          </div>
          <Time />
        </div>
      </div>
      <Dialog />
      <Marks />
    </div>
  );
}
